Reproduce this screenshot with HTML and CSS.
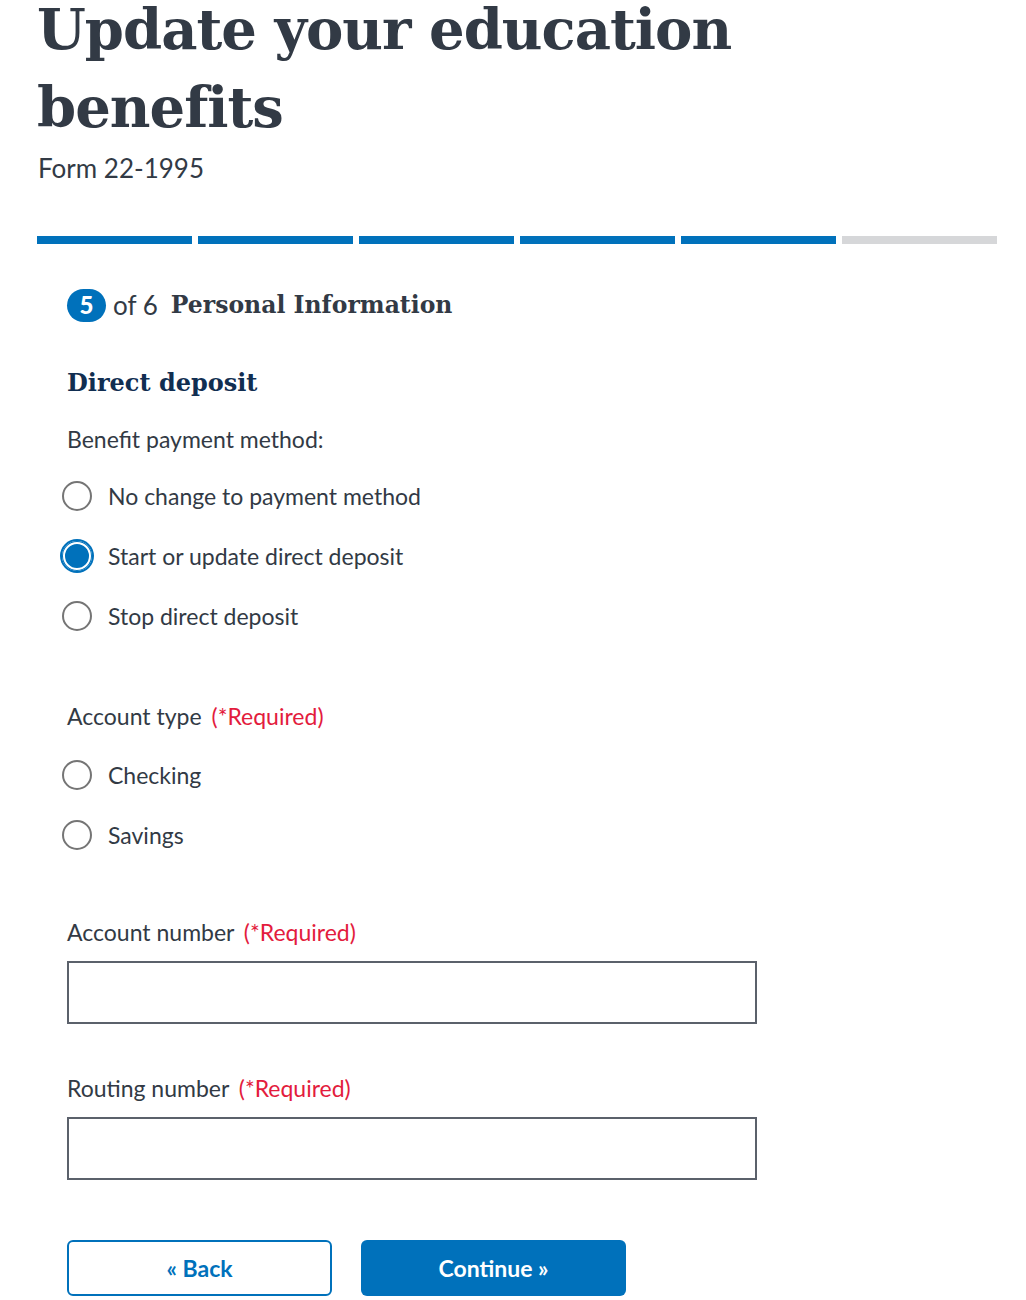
FILE: index.html
```html
<!DOCTYPE html>
<html lang="en">
<head>
<meta charset="utf-8">
<title>Update your education benefits</title>
<link rel="stylesheet" href="styles.css">
</head>
<body>
<main class="page">
  <header class="intro">
    <h1 class="title">Update your education benefits</h1>
    <p class="subtitle">Form 22-1995</p>
  </header>

  <div class="progress">
    <span class="seg done"></span>
    <span class="seg done"></span>
    <span class="seg done"></span>
    <span class="seg done"></span>
    <span class="seg done"></span>
    <span class="seg"></span>
  </div>

  <form class="form">
    <h2 class="step"><span class="step-num">5</span><span class="step-of">of 6</span><span class="step-name">Personal Information</span></h2>

    <h3 class="section-title">Direct deposit</h3>

    <fieldset class="group payment">
      <legend class="legend">Benefit payment method:</legend>
      <label class="radio"><span class="dot"></span><span class="radio-text">No change to payment method</span></label>
      <label class="radio"><span class="dot checked"></span><span class="radio-text">Start or update direct deposit</span></label>
      <label class="radio"><span class="dot"></span><span class="radio-text">Stop direct deposit</span></label>
    </fieldset>

    <fieldset class="group account-type">
      <legend class="legend">Account type <span class="req">(*Required)</span></legend>
      <label class="radio"><span class="dot"></span><span class="radio-text">Checking</span></label>
      <label class="radio"><span class="dot"></span><span class="radio-text">Savings</span></label>
    </fieldset>

    <div class="field field-account">
      <label class="field-label">Account number <span class="req">(*Required)</span></label>
      <div class="input"></div>
    </div>

    <div class="field field-routing">
      <label class="field-label">Routing number <span class="req">(*Required)</span></label>
      <div class="input"></div>
    </div>

    <div class="actions">
      <button type="button" class="btn btn-back">« Back</button>
      <button type="button" class="btn btn-next">Continue »</button>
    </div>
  </form>
</main>
</body>
</html>
```

FILE: styles.css
```css
* { box-sizing: border-box; }

html, body {
  margin: 0;
  padding: 0;
  background: #ffffff;
}

body {
  font-family: "Lato", "Open Sans", sans-serif;
  color: #323a45;
  overflow: hidden;
}

.page {
  padding: 0 30px 0 37px;
}

.intro {
  margin-top: -10px;
}

.title {
  font-family: "DejaVu Serif", serif;
  font-weight: bold;
  font-size: 56px;
  line-height: 78px;
  letter-spacing: -1px;
  color: #323a45;
  margin: 0;
  max-width: 760px;
}

.subtitle {
  font-size: 26px;
  line-height: 32px;
  margin: 6px 0 0 1px;
  color: #323a45;
}

.progress {
  display: flex;
  gap: 6px;
  margin-top: 52px;
  width: 960px;
}

.seg {
  flex: 1;
  height: 8px;
  background: #d6d7d9;
}

.seg.done {
  background: #0071bb;
}

.form {
  padding-left: 30px;
}

.step {
  display: flex;
  align-items: center;
  margin: 44px 0 0;
  font-weight: normal;
  font-size: 26px;
  line-height: 34px;
}

.step-num {
  display: inline-flex;
  align-items: center;
  justify-content: center;
  width: 39px;
  height: 33px;
  border-radius: 17px;
  background: #0071bb;
  color: #fff;
  font-weight: 900;
  font-size: 24px;
  margin-right: 7px;
}

.step-of {
  color: #323a45;
  margin-right: 13px;
}

.step-name {
  font-family: "DejaVu Serif", serif;
  font-weight: bold;
  font-size: 23.5px;
  color: #323a45;
}

.section-title {
  font-family: "DejaVu Serif", serif;
  font-weight: bold;
  font-size: 24px;
  line-height: 34px;
  color: #112e51;
  margin: 44px 0 0;
}

.group {
  border: 0;
  margin: 0;
  padding: 0;
}

.legend {
  padding: 0 0 12px;
  font-size: 23px;
  line-height: 30px;
  margin-top: 24px;
  float: left;
  width: 100%;
}

.account-type .legend {
  padding-bottom: 14px;
}

.req {
  color: #e31c3d;
  margin-left: 4px;
}

.radio {
  clear: both;
  display: flex;
  align-items: center;
  gap: 16px;
  height: 60px;
  margin-left: -5px;
  font-size: 23px;
}

.dot {
  width: 30px;
  height: 30px;
  border-radius: 50%;
  border: 2px solid #757575;
  background: #fff;
  flex: none;
}

.dot.checked {
  border: 0;
  background: #0071bb;
  box-shadow: 0 0 0 2px #0071bb, inset 0 0 0 1px #0071bb, inset 0 0 0 3px #fff;
}

.account-type {
  margin-top: 31px;
}

.field {
  margin-top: 52px;
}

.field-label {
  display: block;
  font-size: 23px;
  line-height: 30px;
}

.input {
  margin-top: 14px;
  width: 690px;
  height: 63px;
  border: 2px solid #5b616b;
}

.field-routing {
  margin-top: 49px;
}

.actions {
  display: flex;
  gap: 29px;
  margin-top: 60px;
}

.btn {
  width: 265px;
  height: 56px;
  border-radius: 6px;
  font-family: "Lato", "Open Sans", sans-serif;
  font-weight: bold;
  font-size: 23px;
  cursor: pointer;
}

.btn-back {
  background: #fff;
  color: #0071bb;
  border: 2px solid #0071bb;
}

.btn-next {
  background: #0071bb;
  color: #fff;
  border: 0;
}
```
